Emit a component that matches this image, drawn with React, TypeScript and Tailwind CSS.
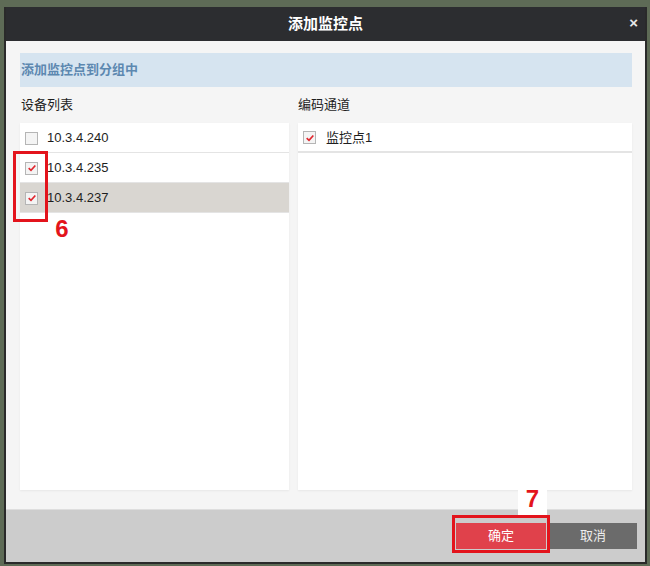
import React from 'react';

const cjk = { fontFamily: '"Liberation Sans", "Noto Sans CJK SC", sans-serif' };

function Check({ on }: { on: boolean }) {
  return (
    <span className="flex h-[13px] w-[13px] shrink-0 items-center justify-center border border-[#b5b5b5] bg-[#f4f4f4]">
      {on && (
        <svg viewBox="0 0 12 12" className="h-[10px] w-[10px]">
          <path d="M2 6.2 L4.8 8.8 L10 3" fill="none" stroke="#e0262e" strokeWidth="2" />
        </svg>
      )}
    </span>
  );
}

function Row({ label, on, selected }: { label: string; on: boolean; selected?: boolean }) {
  return (
    <div
      className={`flex h-[30px] items-center gap-[9px] border-b border-[#e4e4e4] pl-[5px] pt-[1px] text-[13px] text-[#1e1e1e] ${
        selected ? 'bg-[#d9d6d1]' : 'bg-white'
      }`}
    >
      <Check on={on} />
      <span>{label}</span>
    </div>
  );
}

export default function App() {
  return (
    <div className="relative h-[566px] w-[650px] overflow-hidden bg-white" style={cjk}>
      <div className="h-[566px] bg-[#5e6b56] pl-[4px] pr-[3px] pt-[7px]">
        <div className="flex h-[557px] flex-col border-2 border-t-0 border-[#2a2a2a]">
          {/* title */}
          <div className="relative flex h-[34px] items-center justify-center bg-[#2c2d30]">
            <span className="text-[15px] font-bold text-white">添加监控点</span>
            <span className="absolute right-[7px] top-[8px] text-[15px] font-bold leading-none text-[#e8e8e8]">×</span>
          </div>

          {/* body */}
          <div className="flex flex-1 flex-col bg-[#f5f5f5] pl-[14px] pr-[13px] pt-[12px] pb-[19px]">
            <div className="flex h-[34px] items-center bg-[#d6e4f0] pl-[1px] text-[13px] font-bold text-[#5d88b0]">
              添加监控点到分组中
            </div>
            <div className="flex h-[36px] items-center text-[13px] text-[#1e1e1e]">
              <span className="w-[278px] pl-[1px]">设备列表</span>
              <span>编码通道</span>
            </div>
            <div className="flex flex-1 gap-[9px]">
              <div className="w-[269px] bg-white shadow-[0_1px_2px_rgba(0,0,0,0.06)]">
                <Row label="10.3.4.240" on={false} />
                <Row label="10.3.4.235" on />
                <Row label="10.3.4.237" on selected />
              </div>
              <div className="flex-1 bg-white shadow-[0_1px_2px_rgba(0,0,0,0.06)]">
                <div className="flex h-[30px] items-center gap-[10px] border-b-2 border-[#e4e4e4] pl-[5px] pt-[1px] text-[13px] text-[#1e1e1e]">
                  <Check on />
                  <span>监控点1</span>
                </div>
              </div>
            </div>
          </div>

          {/* footer */}
          <div className="flex h-[53px] items-center justify-end gap-[3px] border-t border-[#dedede] bg-[#cccccc] pr-[8px]">
            <button className="h-[26px] w-[90px] bg-[#e0414b] text-[13px] text-white">确定</button>
            <button className="h-[26px] w-[88px] bg-[#6b6b6b] text-[13px] text-[#eeeeee]">取消</button>
          </div>
        </div>
      </div>

      {/* annotations */}
      <div className="absolute left-[13px] top-[151px] h-[71px] w-[35px] border-[3px] border-[#e3141c]" />
      <div className="absolute left-[49px] top-[213px] flex h-[31px] w-[26px] items-center justify-center bg-white text-[24px] font-bold text-[#e3141c]">
        6
      </div>
      <div className="absolute left-[452px] top-[515px] h-[38px] w-[98px] border-[3px] border-[#e3141c]" />
      <div className="absolute left-[518px] top-[483px] flex h-[32px] w-[29px] items-center justify-center bg-white text-[24px] font-bold text-[#e3141c]">
        7
      </div>
    </div>
  );
}
